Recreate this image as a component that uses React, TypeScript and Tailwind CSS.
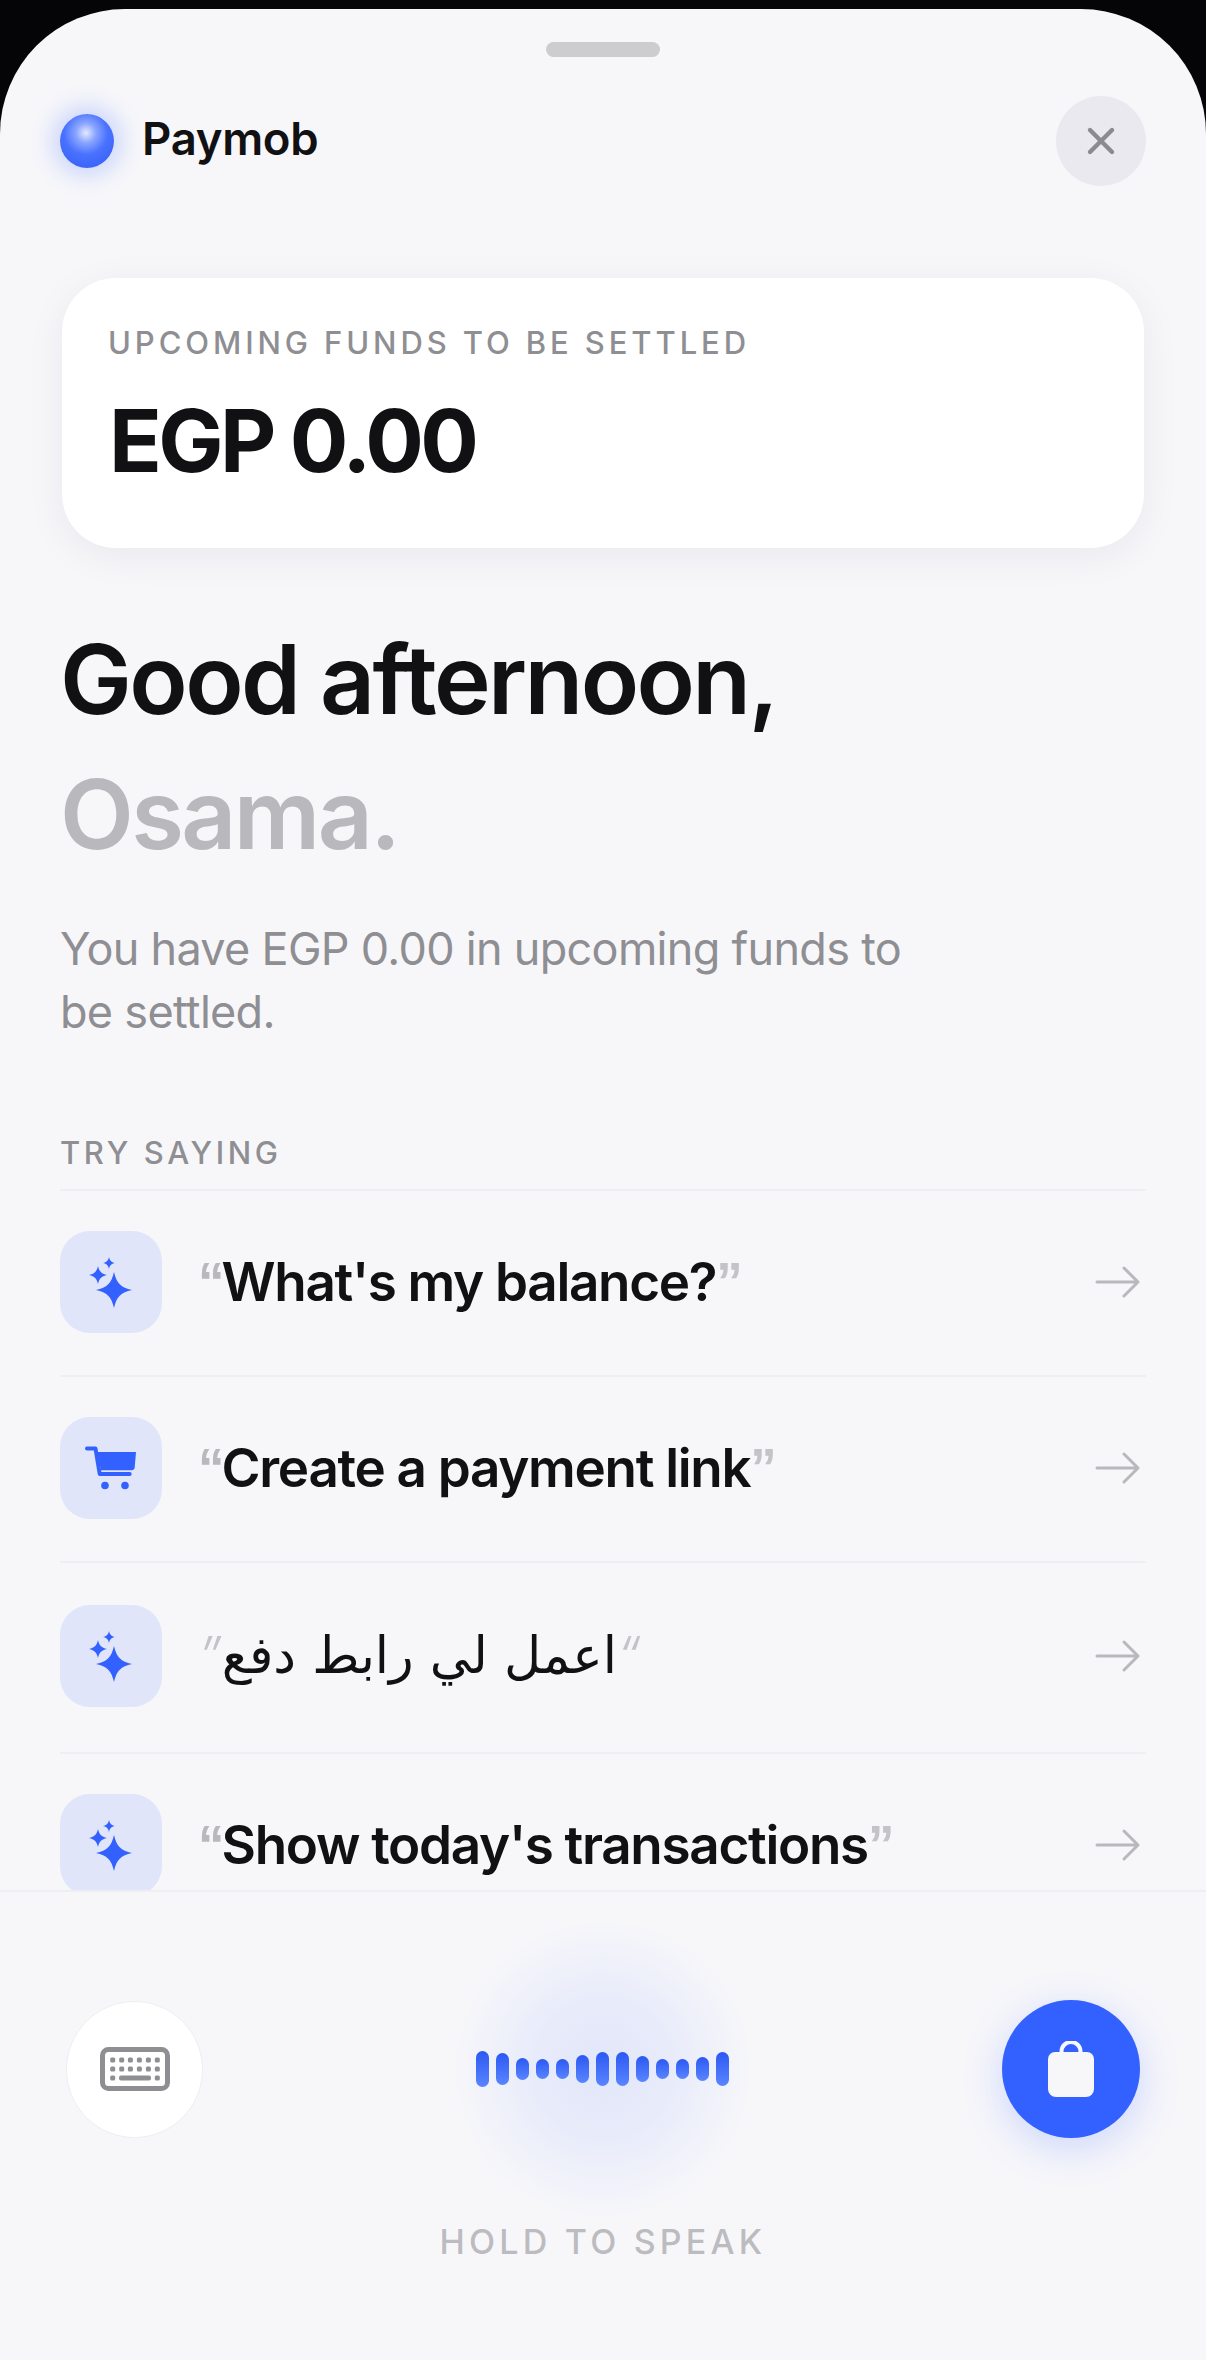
import { X } from 'lucide-react';

const star = (x: number, y: number, r: number) =>
  `M${x} ${y - r}C${x + 0.14 * r} ${y - 0.38 * r} ${x + 0.38 * r} ${y - 0.14 * r} ${x + r} ${y}` +
  `C${x + 0.38 * r} ${y + 0.14 * r} ${x + 0.14 * r} ${y + 0.38 * r} ${x} ${y + r}` +
  `C${x - 0.14 * r} ${y + 0.38 * r} ${x - 0.38 * r} ${y + 0.14 * r} ${x - r} ${y}` +
  `C${x - 0.38 * r} ${y - 0.14 * r} ${x - 0.14 * r} ${y - 0.38 * r} ${x} ${y - r}Z`;

function Sparkles() {
  return (
    <svg width="54" height="54" viewBox="0 0 54 54" fill="#3361ff">
      <path d={star(30, 35, 18)} />
      <path d={star(14, 20, 9)} />
      <path d={star(25, 8, 6)} />
    </svg>
  );
}

function Cart() {
  return (
    <svg width="52" height="44" viewBox="0 0 52 44" fill="none">
      <path d="M2 2.5h8.5l4.2 25.5h30" stroke="#3361ff" strokeWidth="4" strokeLinecap="round" strokeLinejoin="round" />
      <path d="M12 6h39l-1.3 15.5c-.2 1.7-1.4 2.8-3 2.8H16z" fill="#3361ff" />
      <circle cx="20" cy="39.5" r="3.8" fill="#3361ff" />
      <circle cx="40" cy="39.5" r="3.8" fill="#3361ff" />
    </svg>
  );
}

function Arrow() {
  return (
    <svg width="46" height="34" viewBox="0 0 46 34" fill="none" stroke="#b9b9bd" strokeWidth="3" strokeLinecap="round" strokeLinejoin="round">
      <path d="M2 17h41M29 3l14 14-14 14" />
    </svg>
  );
}

function Keyboard() {
  const xs = [12.7, 21.7, 30.4, 39.4, 48.4, 57.3];
  const ys = [13, 22];
  return (
    <svg width="70" height="44" viewBox="0 0 70 44" fill="#8e8e93">
      <rect x="2.5" y="2.5" width="65" height="39" rx="6" fill="none" stroke="#8e8e93" strokeWidth="5" />
      {ys.map((y) => xs.map((x) => <rect key={`${x}-${y}`} x={x - 2.5} y={y - 2.5} width="5" height="5" rx="1.5" />))}
      <rect x="10.2" y="28.5" width="5" height="5" rx="1.5" />
      <rect x="19" y="28.5" width="32" height="5" rx="2" />
      <rect x="54.8" y="28.5" width="5" height="5" rx="1.5" />
    </svg>
  );
}

function Bag() {
  return (
    <svg width="48" height="56" viewBox="0 0 48 56" fill="none">
      <path d="M14.5 13V10.500a9.500 9.500 0 0 1 19 0V13" stroke="#f7f7fa" strokeWidth="4" />
      <path d="M8 11h32a7 7 0 0 1 7 7v30a8 8 0 0 1-8 8H9a8 8 0 0 1-8-8V18a7 7 0 0 1 7-7z" fill="#f7f7fa" />
    </svg>
  );
}

const bars = [36, 32, 22, 20, 20, 28, 34, 34, 26, 20, 20, 24, 34];

const suggestions = [
  { text: "What's my balance?", icon: 'spark', rowClass: 'h-[186px]' },
  { text: 'Create a payment link', icon: 'cart', rowClass: 'h-[186px]' },
  { text: 'اعمل لي رابط دفع', icon: 'spark', rowClass: 'h-[191px]', arabic: true },
  { text: "Show today's transactions", icon: 'spark', rowClass: 'h-[186px]' },
];

export default function App() {
  return (
    <div className="w-[1206px] h-[2360px] bg-[#050507] pt-[9px] overflow-hidden font-['Inter','Noto_Sans',sans-serif]">
      <div className="h-[2351px] bg-[#f7f7fa] rounded-t-[125px] flex flex-col overflow-hidden">
        <div className="flex-1 min-h-0 overflow-hidden">
          <div className="pt-[33px] flex justify-center">
            <div className="w-[114px] h-[15px] rounded-full bg-[#cdcdd0]" />
          </div>

          {/* Header */}
          <div className="mt-[39px] px-[60px] flex items-center justify-between">
            <div className="flex items-center gap-[28px]">
              <div className="w-[54px] h-[54px] rounded-full bg-[radial-gradient(circle_at_48%_35%,#e4eaff_0%,#8aa5ff_22%,#4a72ff_48%,#2f5bf7_100%)] shadow-[0_0_22px_8px_rgba(51,97,255,0.22)]" />
              <span className="-mt-[5px] text-[45.500px] leading-[54px] font-semibold tracking-[-0.3px] text-[#111113]">Paymob</span>
            </div>
            <div className="w-[90px] h-[90px] rounded-full bg-[#e9e9ef] flex items-center justify-center">
              <X size={44} strokeWidth={2.4} color="#8a8a90" />
            </div>
          </div>

          {/* Balance card */}
          <div className="mt-[92px] mx-[62px] h-[270px] rounded-[54px] bg-white shadow-[0_8px_40px_rgba(20,20,50,0.06)] px-[46px] pt-[46px]">
            <div className="text-[31px] leading-[38px] font-medium tracking-[3.9px] text-[#8e8e93]">UPCOMING FUNDS TO BE SETTLED</div>
            <div className="mt-[29px] ml-[1px] text-[87px] leading-[100px] font-bold tracking-[-3.6px] text-[#111113]">EGP 0.00</div>
          </div>

          {/* Greeting */}
          <div className="mt-[64px] px-[60px]">
            <h1 className="text-[96px] leading-[135px] font-semibold tracking-[-2.6px] text-[#111113]">Good afternoon,</h1>
            <div className="text-[96px] leading-[135px] font-semibold tracking-[-2.6px] text-[#b9b9bd]">Osama.</div>
            <p className="mt-[35px] w-[900px] text-[45px] leading-[63px] tracking-[-0.7px] text-[#8e8e93]">
              You have EGP 0.00 in upcoming funds to be settled.
            </p>
          </div>

          {/* Suggestions */}
          <div className="mt-[91px] px-[60px]">
            <div className="pb-[17px] border-b-2 border-[#eeeef3] text-[31px] leading-[38px] font-medium tracking-[3.6px] text-[#8e8e93]">TRY SAYING</div>
            {suggestions.map((s) => (
              <div key={s.text} className={`${s.rowClass} pb-[3px] flex items-center border-b-2 border-[#eeeef3]`}>
                <div className="w-[102px] h-[102px] rounded-[30px] bg-[#e0e5fa] flex items-center justify-center shrink-0">
                  {s.icon === 'cart' ? <Cart /> : <Sparkles />}
                </div>
                <div className="ml-[36px] flex-1 flex items-center text-[53px] leading-[64px]">
                  {s.arabic ? (
                    <>
                      <span className="text-[#c4c4c8] italic font-light">”</span>
                      <span dir="rtl" className="font-['DejaVu_Sans',sans-serif] font-normal text-[51px] text-[#111113]">{s.text}</span>
                      <span className="text-[#c4c4c8] italic font-light">“</span>
                    </>
                  ) : (
                    <>
                      <span className="font-['Liberation_Sans',sans-serif] font-bold text-[#b9b9bd]">“</span>
                      <span className="-ml-[3px] font-semibold tracking-[-1.3px] text-[#111113]">{s.text}</span>
                      <span className="font-['Liberation_Sans',sans-serif] font-bold text-[#c4c4c8]">”</span>
                    </>
                  )}
                </div>
                <div className="mr-[5px]">
                  <Arrow />
                </div>
              </div>
            ))}
          </div>
        </div>

        {/* Voice bar */}
        <div className="h-[470px] shrink-0 border-t-2 border-[#eeeef3] bg-[#f7f7fa] pt-[108px]">
          <div className="px-[66px] flex items-center justify-between">
            <div className="w-[137px] h-[137px] rounded-full bg-white border border-[#eeeef3] flex items-center justify-center">
              <Keyboard />
            </div>
            <div className="relative flex items-center gap-[7px]">
              <div className="absolute left-1/2 top-1/2 w-[300px] h-[300px] -translate-x-1/2 -translate-y-1/2 rounded-full bg-[radial-gradient(circle_closest-side,rgba(51,97,255,0.11)_0%,rgba(51,97,255,0.08)_45%,rgba(51,97,255,0)_100%)]" />
              {bars.map((h, i) => (
                <div key={i} className="relative w-[13px] rounded-full bg-gradient-to-b from-[#2c58f2] to-[#5a84ff]" style={{ height: h }} />
              ))}
            </div>
            <div className="w-[138px] h-[138px] rounded-full bg-[#3361ff] shadow-[0_10px_40px_rgba(51,97,255,0.22)] flex items-center justify-center">
              <Bag />
            </div>
          </div>
          <div className="mt-[84px] text-center text-[34px] leading-[40px] font-medium tracking-[4.2px] text-[#bcbcc0]">HOLD TO SPEAK</div>
        </div>
      </div>
    </div>
  );
}
